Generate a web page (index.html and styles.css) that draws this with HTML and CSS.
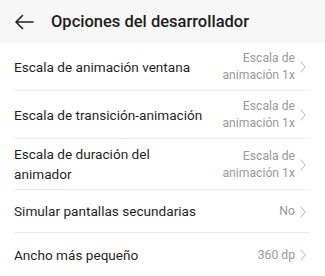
FILE: index.html
```html
<!DOCTYPE html>
<html lang="es">
<head>
    <meta charset="UTF-8">
    <meta name="viewport" content="width=device-width, initial-scale=1.0">
    <title>Opciones del desarrollador</title>
    <link rel="stylesheet" href="styles.css">
</head>
<body>
    <div class="header">
        <svg class="back" width="20" height="16" viewBox="0 0 20 16">
            <path d="M19 8H2M8.5 1.5L2 8l6.5 6.5" fill="none" stroke="#222" stroke-width="1.6" stroke-linecap="round" stroke-linejoin="round"/>
        </svg>
        <div class="title">Opciones del desarrollador</div>
    </div>
    <div class="list">
        <div class="row tall">
            <div class="label">Escala de animación ventana</div>
            <div class="value">Escala de<br>animación 1x</div>
            <svg class="chevron" width="6" height="12" viewBox="0 0 6 12"><path d="M0.7 0.7L5.2 6L0.7 11.3" fill="none" stroke="#c8c8c8" stroke-width="1.1"/></svg>
        </div>
        <div class="row tall">
            <div class="label">Escala de transición-animación</div>
            <div class="value">Escala de<br>animación 1x</div>
            <svg class="chevron" width="6" height="12" viewBox="0 0 6 12"><path d="M0.7 0.7L5.2 6L0.7 11.3" fill="none" stroke="#c8c8c8" stroke-width="1.1"/></svg>
        </div>
        <div class="row tall">
            <div class="label">Escala de duración del<br>animador</div>
            <div class="value">Escala de<br>animación 1x</div>
            <svg class="chevron" width="6" height="12" viewBox="0 0 6 12"><path d="M0.7 0.7L5.2 6L0.7 11.3" fill="none" stroke="#c8c8c8" stroke-width="1.1"/></svg>
        </div>
        <div class="row">
            <div class="label">Simular pantallas secundarias</div>
            <div class="value">No</div>
            <svg class="chevron" width="6" height="12" viewBox="0 0 6 12"><path d="M0.7 0.7L5.2 6L0.7 11.3" fill="none" stroke="#c8c8c8" stroke-width="1.1"/></svg>
        </div>
        <div class="row last">
            <div class="label">Ancho más pequeño</div>
            <div class="value">360 dp</div>
            <svg class="chevron" width="6" height="12" viewBox="0 0 6 12"><path d="M0.7 0.7L5.2 6L0.7 11.3" fill="none" stroke="#c8c8c8" stroke-width="1.1"/></svg>
        </div>
    </div>
</body>
</html>
```

FILE: styles.css
```css
body {
    margin: 0;
    font-family: Roboto, "Noto Sans", sans-serif;
    background-color: #fff;
    color: #1f1f1f;
}

.header {
    display: flex;
    align-items: center;
    height: 43px;
    background-color: #f7f7f7;
    padding-left: 14px;
}

.back {
    margin-right: 17px;
}

.title {
    font-size: 16.5px;
    font-weight: 500;
    color: #1c1c1c;
}

.list {
    padding: 0 15px 0 14px;
}

.row {
    box-sizing: border-box;
    display: flex;
    align-items: center;
    min-height: 43px;
    padding: 4px 4px 5px 0;
    border-bottom: 1px solid #ebebeb;
}

.row.tall {
    min-height: 48px;
}

.row.last {
    border-bottom: none;
}

.label {
    flex: 1;
    font-size: 13.6px;
    line-height: 20px;
    padding-top: 1px;
}

.value {
    font-size: 12.2px;
    line-height: 17px;
    color: #9a9a9a;
    text-align: right;
    margin-right: 5px;
    padding-top: 2px;
}

.chevron {
    display: block;
    margin-top: 2px;
}
```
